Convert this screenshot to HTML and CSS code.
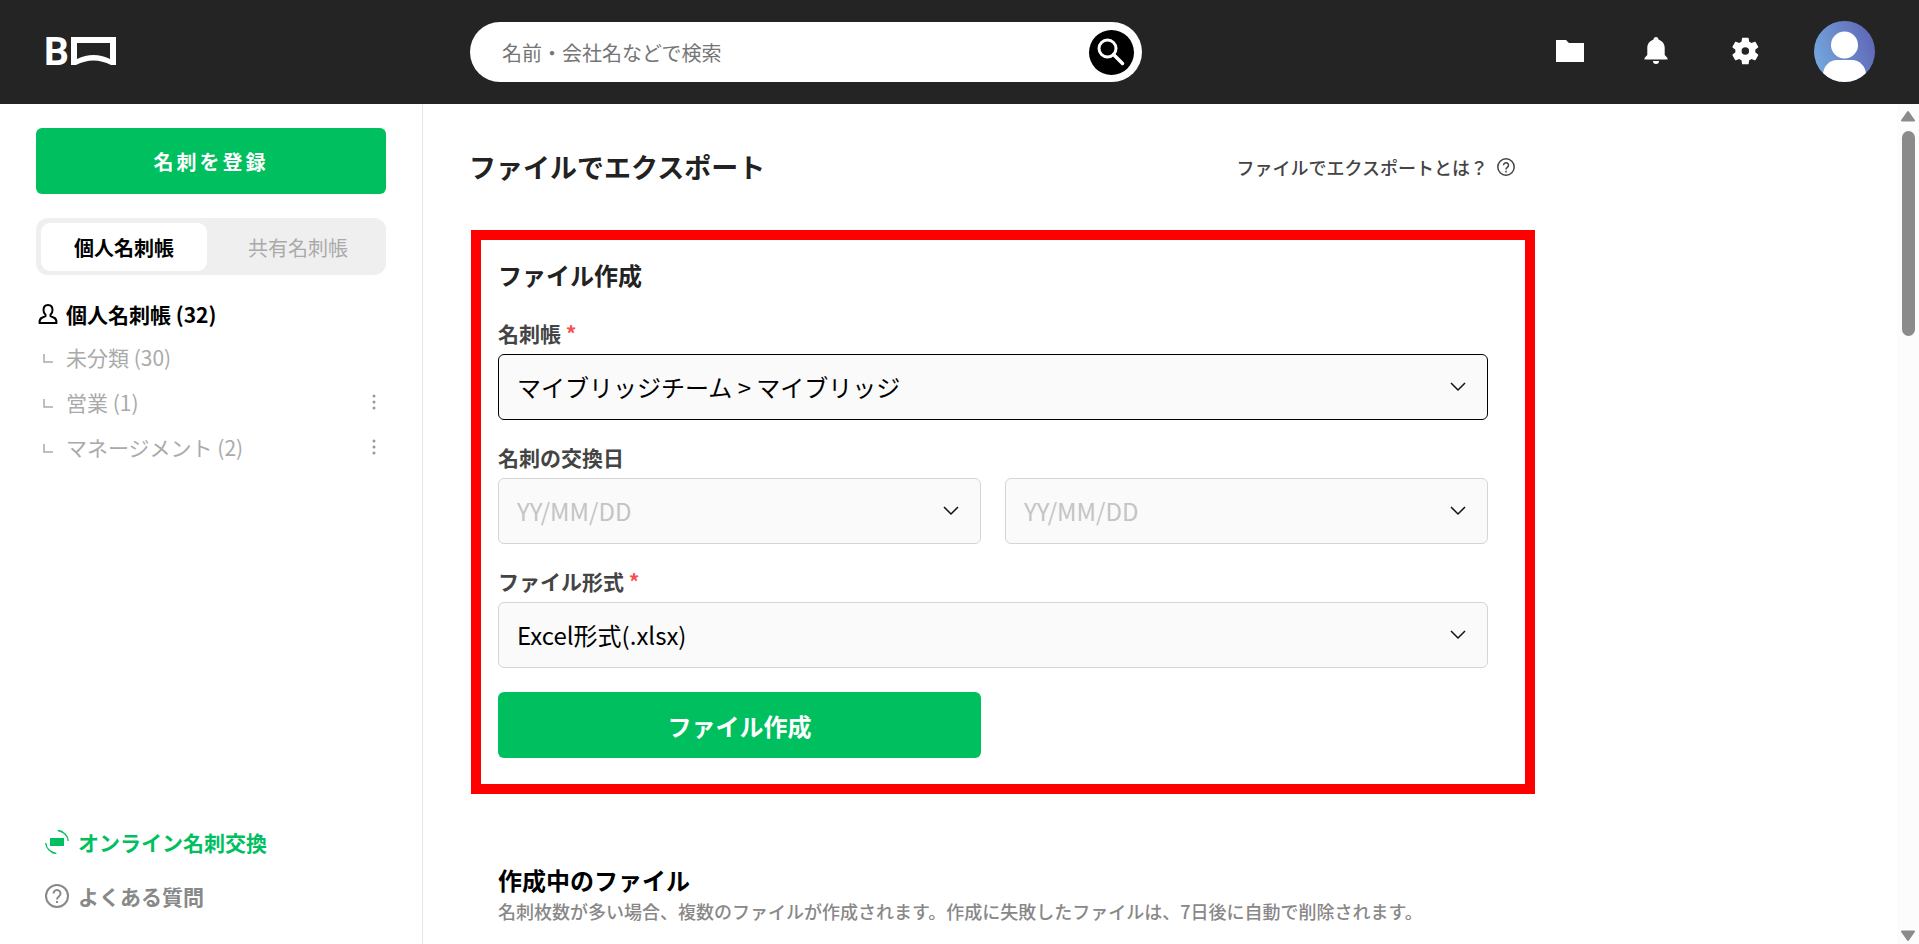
FILE: index.html
```html
<!DOCTYPE html>
<html lang="ja">
<head>
  <meta charset="UTF-8" />
  <meta name="viewport" content="width=device-width, initial-scale=1" />
  <title>ファイルでエクスポート</title>
  <link rel="stylesheet" href="styles.css">
</head>
<body>
  <header class="header">
    <a class="logo" href="#" aria-label="ホーム">
      <svg width="74" height="50" viewBox="0 0 74 50">
        <text class="logo-letter" x="-1" y="39">B</text>
        <path d="M26 11h45v28h-5Q48.500 30 31 39h-5zM32 17v16Q48.500 25 65 33V17z" fill="#fff" fill-rule="evenodd"/>
      </svg>
    </a>

    <form class="search">
      <input class="search-input" type="text" placeholder="名前・会社名などで検索" aria-label="検索">
      <button class="search-button" type="button" aria-label="検索する">
        <svg width="45" height="45" viewBox="0 0 45 45" fill="none" stroke="#fff" stroke-width="3">
          <circle cx="18.500" cy="18.500" r="8.500"/>
          <path d="M24.500 24.500l9 9" stroke-width="3.500" stroke-linecap="round"/>
        </svg>
      </button>
    </form>

    <nav class="header-nav">
      <button class="icon-button folder" type="button" aria-label="名刺帳">
        <svg width="28" height="28" viewBox="0 0 28 28"><path d="M0 3h10l3 3h15v19H0z" fill="#fff"/></svg>
      </button>
      <button class="icon-button" type="button" aria-label="お知らせ">
        <svg width="28" height="28" viewBox="0 0 28 28" fill="#fff">
          <path d="M14 0c1.500 0 2.400 1.200 2.500 2.500C20.500 4 22.700 7 22.700 11v7l2.800 3v1.500h-23V21l2.800-3v-7c0-4 2.200-7 6.200-8.500C11.600 1.200 12.500 0 14 0z"/>
          <path d="M11 24h6a3 3 0 0 1-6 0z"/>
        </svg>
      </button>
      <button class="icon-button" type="button" aria-label="設定">
        <svg width="32" height="32" viewBox="-1 0 24 24" fill="#fff">
          <path d="M19.430 12.980c.04-.32.07-.64.07-.98s-.03-.66-.07-.98l2.110-1.650c.19-.15.24-.42.12-.64l-2-3.460c-.12-.22-.39-.3-.61-.22l-2.490 1c-.52-.4-1.080-.73-1.690-.98l-.38-2.650C14.460 2.180 14.250 2 14 2h-4c-.25 0-.46.18-.49.42l-.38 2.650c-.61.25-1.170.59-1.690.98l-2.490-1c-.23-.09-.49 0-.61.22l-2 3.460c-.13.22-.07.49.12.64l2.110 1.650c-.04.32-.07.65-.07.98s.03.66.07.98l-2.110 1.650c-.19.15-.24.42-.12.64l2 3.460c.12.22.39.3.61.22l2.490-1c.52.4 1.080.73 1.690.98l.38 2.650c.03.24.24.42.49.42h4c.25 0 .46-.18.49-.42l.38-2.650c.61-.25 1.170-.59 1.690-.98l2.490 1c.23.09.49 0 .61-.22l2-3.460c.12-.22.07-.49-.12-.64l-2.110-1.650zM12 14.800a2.800 2.800 0 1 1 0-5.600 2.800 2.800 0 0 1 0 5.600z"/>
        </svg>
      </button>
      <button class="avatar" type="button" aria-label="プロフィール">
        <svg width="61" height="61" viewBox="0 0 61 61">
          <defs>
            <linearGradient id="avatarBg" x1="0" y1="0.7" x2="1" y2="0.3">
              <stop offset="0" stop-color="#74a9de"/>
              <stop offset="1" stop-color="#6066b6"/>
            </linearGradient>
            <clipPath id="avatarClip"><circle cx="30.500" cy="30.500" r="30.500"/></clipPath>
          </defs>
          <g clip-path="url(#avatarClip)">
            <rect width="61" height="61" fill="url(#avatarBg)"/>
            <circle cx="30.500" cy="24" r="13.500" fill="#fff"/>
            <path d="M9 61v-7c0-9 7-15 14-15h15c7 0 14 6 14 15v7z" fill="#fff"/>
          </g>
        </svg>
      </button>
    </nav>
  </header>

  <div class="layout">
    <aside class="sidebar">
      <button class="register-button" type="button">名刺を登録</button>

      <div class="tabs">
        <button class="tab active" type="button">個人名刺帳</button>
        <button class="tab" type="button">共有名刺帳</button>
      </div>

      <ul class="book-list">
        <li class="book current">
          <a href="#">
            <svg width="20" height="22" viewBox="0 0 20 22" fill="none" stroke="#000" stroke-width="2" stroke-linejoin="round">
              <path d="M10 2c-3 0-4.500 2-4.500 5 0 2.300.8 3.800 2 4.800v1.400L3.500 15C2 15.800 1.500 17 1.500 20h17c0-3-.5-4.200-2-5l-4-1.800v-1.400c1.200-1 2-2.500 2-4.800 0-3-1.500-5-4.500-5z"/>
            </svg>
            個人名刺帳 (32)
          </a>
        </li>
        <li class="book">
          <a href="#">
            <svg width="20" height="20" viewBox="0 0 20 20" fill="none" stroke="#aaa" stroke-width="1.500"><path d="M6 7v8h9"/></svg>
            未分類 (30)
          </a>
        </li>
        <li class="book">
          <a href="#">
            <svg width="20" height="20" viewBox="0 0 20 20" fill="none" stroke="#aaa" stroke-width="1.500"><path d="M6 7v8h9"/></svg>
            営業 (1)
          </a>
          <button class="more-button" type="button" aria-label="メニュー">
            <svg width="4" height="18" viewBox="0 0 4 18" fill="#999"><circle cx="2" cy="3" r="1.500"/><circle cx="2" cy="9" r="1.500"/><circle cx="2" cy="15" r="1.500"/></svg>
          </button>
        </li>
        <li class="book">
          <a href="#">
            <svg width="20" height="20" viewBox="0 0 20 20" fill="none" stroke="#aaa" stroke-width="1.500"><path d="M6 7v8h9"/></svg>
            マネージメント (2)
          </a>
          <button class="more-button" type="button" aria-label="メニュー">
            <svg width="4" height="18" viewBox="0 0 4 18" fill="#999"><circle cx="2" cy="3" r="1.500"/><circle cx="2" cy="9" r="1.500"/><circle cx="2" cy="15" r="1.500"/></svg>
          </button>
        </li>
      </ul>

      <div class="side-links">
        <a class="side-link online" href="#">
          <svg width="24" height="24" viewBox="0 0 24 24" fill="none" stroke="#00bf5f">
            <path d="M5 8h14v8H5z" fill="#00bf5f" stroke="none"/>
            <path d="M13 .7C18.500 1.200 22.800 5.500 23.300 11M11 23.300C5.500 22.800 1.200 18.500.7 13" stroke-width="1.300"/>
            <path d="M11.500 0l5.500.8 1.500 2.700zM12.500 24l-5.500-.8-1.500-2.700z" fill="#00bf5f" stroke="none"/>
          </svg>
          オンライン名刺交換
        </a>
        <a class="side-link" href="#">
          <svg width="24" height="24" viewBox="0 0 24 24" fill="none" stroke="#888" stroke-width="2">
            <circle cx="12" cy="12" r="11"/>
            <path d="M8.500 9.500a3.500 3.500 0 1 1 5.600 2.800c-1.300 1-2.100 1.600-2.100 3.200M12 17v2"/>
          </svg>
          よくある質問
        </a>
      </div>
    </aside>

    <main class="main">
      <div class="content">
        <div class="title-row">
          <h1>ファイルでエクスポート</h1>
          <a class="help-link" href="#">
            ファイルでエクスポートとは？
            <svg width="18" height="18" viewBox="0 0 18 18" fill="none" stroke="#444" stroke-width="1.500">
              <circle cx="9" cy="9" r="8.200"/>
              <path d="M6.500 7.200a2.500 2.500 0 1 1 4 2c-1 .8-1.500 1.100-1.500 2.300M9 12.800v1.600"/>
            </svg>
          </a>
        </div>

        <form class="export-form">
          <h2>ファイル作成</h2>

          <div class="field">
            <label for="book">名刺帳 <span class="required">*</span></label>
            <div class="control">
              <select id="book" class="input selected">
                <option>マイブリッジチーム &gt; マイブリッジ</option>
              </select>
              <svg class="chevron" width="16" height="10" viewBox="0 0 16 10"><path d="M1 1l7 7 7-7"/></svg>
            </div>
          </div>

          <div class="field">
            <label for="dateFrom">名刺の交換日</label>
            <div class="date-row">
              <div class="control">
                <input id="dateFrom" class="input" type="text" placeholder="YY/MM/DD">
                <svg class="chevron" width="16" height="10" viewBox="0 0 16 10"><path d="M1 1l7 7 7-7"/></svg>
              </div>
              <div class="control">
                <input id="dateTo" class="input" type="text" placeholder="YY/MM/DD" aria-label="名刺の交換日 終了">
                <svg class="chevron" width="16" height="10" viewBox="0 0 16 10"><path d="M1 1l7 7 7-7"/></svg>
              </div>
            </div>
          </div>

          <div class="field">
            <label for="format">ファイル形式 <span class="required">*</span></label>
            <div class="control">
              <select id="format" class="input">
                <option>Excel形式(.xlsx)</option>
              </select>
              <svg class="chevron" width="16" height="10" viewBox="0 0 16 10"><path d="M1 1l7 7 7-7"/></svg>
            </div>
          </div>

          <div class="date-row">
            <button class="create-button" type="button">ファイル作成</button>
          </div>
        </form>

        <section class="files">
          <h2>作成中のファイル</h2>
          <p>名刺枚数が多い場合、複数のファイルが作成されます。作成に失敗したファイルは、7日後に自動で削除されます。</p>
        </section>
      </div>
    </main>

    <!-- スクロールバー -->
    <div class="scrollbar" aria-hidden="true">
      <svg width="14" height="12" viewBox="0 0 14 12"><path d="M7 2L13 10.500H1z"/></svg>
      <div class="scroll-track"><div class="scroll-thumb"></div></div>
      <svg width="14" height="12" viewBox="0 0 14 12"><path d="M7 10L13 1.500H1z"/></svg>
    </div>
  </div>
</body>
</html>
```

FILE: styles.css
```css
* {
  box-sizing: border-box;
}

body {
  margin: 0;
  height: 100vh;
  display: flex;
  flex-direction: column;
  overflow: hidden;
  font-family: "Noto Sans CJK JP", sans-serif;
  color: #000;
  background-color: #fff;
}

h1, h2, p, ul {
  margin: 0;
  padding: 0;
}

a {
  color: inherit;
  text-decoration: none;
}

button, input, select {
  font-family: inherit;
}

button {
  padding: 0;
  border: none;
  background: none;
  cursor: pointer;
}

svg {
  display: block;
  flex-shrink: 0;
}

/* ヘッダー */
.header {
  flex-shrink: 0;
  height: 104px;
  display: flex;
  align-items: center;
  padding: 0 44px 0 45px;
  background-color: #242424;
}

.logo {
  width: 425px;
  padding-bottom: 2px;
}

.logo svg {
  overflow: visible;
}

.logo-letter {
  font-family: Roboto, sans-serif;
  font-size: 39px;
  font-weight: bold;
  fill: #fff;
}

.search {
  width: 672px;
  height: 60px;
  display: flex;
  align-items: center;
  padding: 0 8px 0 32px;
  border-radius: 30px;
  background-color: #fff;
}

.search-input {
  flex: 1;
  padding: 0;
  border: none;
  outline: none;
  background: none;
  font-size: 20px;
}

.search-input::placeholder {
  color: #757575;
}

.search-button {
  border-radius: 50%;
  background-color: #000;
}

.header-nav {
  margin-left: auto;
  padding-bottom: 2px;
  display: flex;
  align-items: center;
  gap: 52px;
}

.icon-button {
  width: 36px;
  display: flex;
  justify-content: center;
}

.icon-button.folder {
  width: 32px;
}

/* レイアウト */
.layout {
  flex: 1;
  min-height: 0;
  display: flex;
}

.sidebar {
  width: 423px;
  flex-shrink: 0;
  display: flex;
  flex-direction: column;
  padding: 24px 36px 21px;
  border-right: 1px solid #e5e5e5;
}

.register-button {
  height: 66px;
  flex-shrink: 0;
  border-radius: 6px;
  background-color: #00bf5f;
  color: #fff;
  font-size: 20px;
  font-weight: bold;
  letter-spacing: 3px;
}

.tabs {
  margin-top: 24px;
  padding: 5px 5px 4px;
  display: flex;
  gap: 8px;
  border-radius: 12px;
  background-color: #efefef;
}

.tab {
  flex: 1;
  height: 48px;
  border-radius: 9px;
  color: #aaa;
  font-size: 20px;
}

.tab.active {
  background-color: #fff;
  color: #000;
  font-weight: bold;
}

.book-list {
  margin-top: 18px;
  list-style: none;
}

.book {
  height: 45px;
  display: flex;
  align-items: center;
  justify-content: space-between;
  padding: 0 10px 0 2px;
  color: #aaa;
  font-size: 21px;
}

.book a {
  display: flex;
  align-items: center;
  gap: 8px;
}

.book.current {
  height: 41px;
  color: #000;
  font-weight: bold;
}

.side-links {
  margin-top: auto;
  padding: 0 9px;
}

.side-link {
  height: 54px;
  display: flex;
  align-items: center;
  gap: 9px;
  color: #888;
  font-size: 21px;
  font-weight: bold;
}

.side-link.online {
  color: #00bf5f;
}

.main {
  flex: 1;
  min-width: 0;
  overflow: hidden;
  padding: 43px 46px 0;
}

.content {
  max-width: 1066px;
}

.title-row {
  display: flex;
  align-items: center;
  justify-content: space-between;
  margin-bottom: 43px;
  padding-right: 20px;
  line-height: 40px;
}

h1 {
  font-size: 27px;
  color: #222;
}

.help-link {
  display: flex;
  align-items: center;
  gap: 9px;
  color: #444;
  font-size: 18px;
  font-weight: 500;
}

/* ファイル作成フォーム */
.export-form {
  margin-left: 2px;
  padding: 17px 37px 26px 17px;
  border: 10px solid #f00;
}

h2 {
  font-size: 24px;
  line-height: 36px;
}

.export-form h2 {
  margin-bottom: 26px;
  color: #222;
}

.field {
  margin-bottom: 24px;
}

.field label {
  display: block;
  margin-bottom: 7px;
  color: #444;
  font-size: 21px;
  line-height: 28px;
  font-weight: bold;
}

.field + .field {
  margin-top: -1px;
}

.required {
  color: #f54f4f;
}

.date-row {
  display: grid;
  grid-template-columns: 1fr 1fr;
  gap: 24px;
}

/* 矢印は入力欄の右端に重ねる */
.control {
  display: grid;
  align-items: center;
}

.input {
  grid-area: 1 / 1;
  width: 100%;
  height: 66px;
  padding: 0 48px 2px 18px;
  border: 1px solid #d5d5d5;
  border-radius: 6px;
  appearance: none;
  background-color: #fafafa;
  color: #000;
  font-size: 24px;
}

.input.selected {
  border-color: #000;
}

.input::placeholder {
  color: #c4c4c4;
}

.chevron {
  grid-area: 1 / 1;
  justify-self: end;
  margin-right: 22px;
  fill: none;
  stroke: #111;
  stroke-width: 1.5;
  pointer-events: none;
}

.create-button {
  height: 66px;
  border-radius: 6px;
  background-color: #00bf5f;
  color: #fff;
  font-size: 24px;
  font-weight: bold;
}

.files {
  margin: 68px 0 0 29px;
}

.files p {
  color: #888;
  font-size: 18px;
  line-height: 26px;
  font-weight: 500;
}

/* スクロールバー */
.scrollbar {
  width: 22px;
  flex-shrink: 0;
  display: flex;
  flex-direction: column;
  align-items: center;
  gap: 9px;
  padding: 6px 0 2px;
  background-color: #fcfcfc;
  fill: #8b8b8b;
  stroke: #8b8b8b;
  stroke-width: 2;
  stroke-linejoin: round;
}

.scroll-track {
  flex: 1;
}

.scroll-thumb {
  width: 13px;
  height: 26%;
  border-radius: 7px;
  background-color: #8b8b8b;
}
```
